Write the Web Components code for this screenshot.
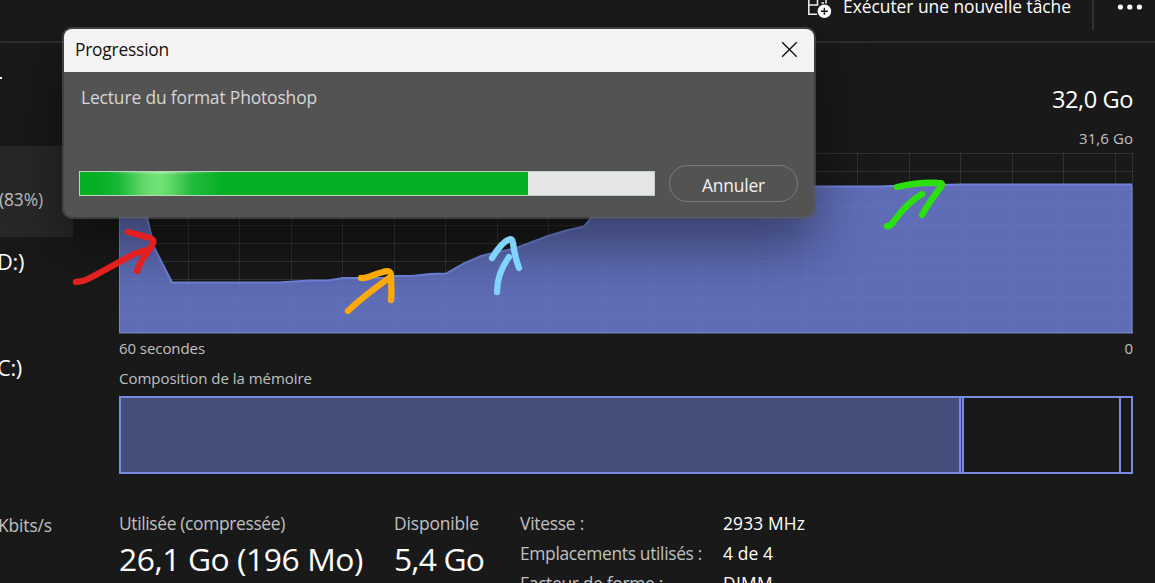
<!DOCTYPE html>
<html lang="fr">
<head>
<meta charset="utf-8">
<title>Gestionnaire des tâches</title>
<style>
  body {
    margin: 0;
    width: 1155px;
    height: 583px;
    overflow: hidden;
    background: #191919;
    color: #fff;
    font-family: "Open Sans", "Noto Sans", sans-serif;
  }
</style>
</head>
<body>
<task-manager></task-manager>

<script>
// Line of text; "w" is the width its letters are spread over
class UiText extends HTMLElement {
  connectedCallback() {
    const size = this.getAttribute('size') || 17.4;
    const line = this.getAttribute('line') || 24;
    const root = this.attachShadow({ mode: 'open' });
    root.innerHTML = `
    <style>
      :host {
        display: block;
        flex: none;
        width: max-content;
        height: ${line}px;
        white-space: nowrap;
        font-size: ${size}px;
        line-height: ${line}px;
      }
      :host([dim]) { color: #c0c0c0; }
      span { display: block; width: max-content; }
    </style>
    <span><slot></slot></span>
    `;
    const w = Number(this.getAttribute('w'));
    if (w) {
      const span = root.querySelector('span');
      const length = Number(this.getAttribute('chars')) || this.textContent.length;
      const extra = (w - span.getBoundingClientRect().width) / length;
      span.style.letterSpacing = extra.toFixed(3) + 'px';
    }
  }
}

class CommandBar extends HTMLElement {
  constructor() {
    super();
    this.attachShadow({ mode: 'open' }).innerHTML = `
    <style>
      :host {
        display: flex;
        justify-content: flex-end;
        align-items: flex-start;
        height: 41px;
        border-bottom: 2px solid #2d2d2d;
      }
      .run { margin: -6px 0 0 11px; }
      .sep { width: 2px; height: 30px; margin-left: 21px; background: #313131; }
      .more { margin-left: 23px; }
      svg { display: block; }
    </style>
    <svg width="24" height="20" viewBox="0 0 24 20" fill="none" stroke="#f2f2f2" stroke-width="1.5">
      <path d="M.8 -4V14.2H9M.8 5H9.5V-4M13.5 3H16M18 3.5V-4"/>
      <circle cx="16.4" cy="11.3" r="6.8" fill="#fff" stroke="none"/>
      <path d="M16.4 7.8v7M12.9 11.3h7" stroke="#191919" stroke-width="1.5"/>
    </svg>
    <ui-text class="run" w="228">Exécuter une nouvelle tâche</ui-text>
    <div class="sep"></div>
    <svg class="more" width="38" height="14" viewBox="0 0 38 14" fill="#fff">
      <circle cx="3.4" cy="7" r="2.6"/><circle cx="12.8" cy="7" r="2.6"/><circle cx="22.4" cy="7" r="2.6"/>
    </svg>
    `;
  }
}

class SideBar extends HTMLElement {
  constructor() {
    super();
    this.attachShadow({ mode: 'open' }).innerHTML = `
    <style>
      :host { display: block; width: 73px; height: 540px; overflow: hidden; }
      :host::before { content: ""; display: block; height: 34px; }
      .cut { width: 2px; height: 2px; background: #ffffe8; }
      .selected { height: 91px; margin-top: 67px; padding-top: 41px; box-sizing: border-box; background: #282828; }
      .selected ui-text { margin-left: -1px; }
      .d { margin: 11px 0 0 -3px; }
      .c { margin: 78px 0 0 -3px; }
      .net { margin: 131px 0 0 -2px; }
    </style>
    <div class="cut"></div>
    <div class="selected"><ui-text dim w="44">(83%)</ui-text></div>
    <ui-text class="d" size="21.8" line="28" w="27">D:)</ui-text>
    <ui-text class="c" size="21.8" line="28" w="25">C:)</ui-text>
    <ui-text class="net" dim w="54">Kbits/s</ui-text>
    `;
  }
}

class MemoryChart extends HTMLElement {
  constructor() {
    super();
    let grid = '';
    for (let i = 0; i < 20; i++) {
      grid += `M${Math.floor(17.9 + i * 51.5)}.5 0V181`;
    }
    for (let y = 0; y < 180; y += 18) {
      grid += `M0 ${y}.5H1014`;
    }
    const line = '0,32 20,33 28,64 35,94 53,129.5 159,129.5 191,127.5 209,127.5 224,125 273,125 276,123 ' +
      '293,123 311,121 327,120.5 344,111 362,103 378,99 396,95.5 413,89 429,83 447,77.5 465,73.5 ' +
      '473,64 500,33.5 761,33.5 793,32.3 811,32.3 841,31.4 1013,31.4';
    this.attachShadow({ mode: 'open' }).innerHTML = `
    <style>
      :host { display: block; height: 181px; }
      svg { display: block; }
    </style>
    <svg width="1014" height="181" viewBox="0 0 1014 181" fill="none">
      <path d="${grid}M1013.5 0V181" stroke="#fff" stroke-opacity=".1"/>
      <polygon points="${line} 1013,180 0,180" fill="#7082df" fill-opacity=".8"/>
      <path d="M.5 32V180M1013 32V180" stroke="#7787d8"/>
      <path d="M0 179.8H1014" stroke="#7380bf" stroke-width="1.4"/>
      <polyline points="${line}" stroke="#7184dc" stroke-width="2"/>
    </svg>
    `;
  }
}

class MemoryComposition extends HTMLElement {
  constructor() {
    super();
    this.attachShadow({ mode: 'open' }).innerHTML = `
    <style>
      :host {
        display: flex;
        box-sizing: border-box;
        height: 78px;
        border: 2px solid #788ce2;
      }
      div { border-right: 2px solid #788ce2; }
      .used { width: 838px; background: #454f7c; }
      .modified { width: 1px; background: #343d6c; }
      .standby { width: 155px; }
    </style>
    <div class="used"></div>
    <div class="modified"></div>
    <div class="standby"></div>
    `;
  }
}

class MemoryStats extends HTMLElement {
  constructor() {
    super();
    this.attachShadow({ mode: 'open' }).innerHTML = `
    <style>
      :host {
        display: grid;
        grid-template-columns: 275px 126px 203px 1fr;
      }
      .col { display: grid; gap: 6px; align-content: start; }
      .big { gap: 2px; }
    </style>
    <div class="col big">
      <ui-text dim w="166">Utilisée (compressée)</ui-text>
      <ui-text size="31.8" line="44" w="244">26,1 Go (196 Mo)</ui-text>
    </div>
    <div class="col big">
      <ui-text dim w="85">Disponible</ui-text>
      <ui-text size="31.8" line="44" w="90">5,4 Go</ui-text>
    </div>
    <div class="col">
      <ui-text dim w="64">Vitesse :</ui-text>
      <ui-text dim w="182">Emplacements utilisés :</ui-text>
      <ui-text dim w="143">Facteur de forme :</ui-text>
    </div>
    <div class="col">
      <ui-text w="82">2933 MHz</ui-text>
      <ui-text w="50">4 de 4</ui-text>
      <ui-text w="50">DIMM</ui-text>
    </div>
    `;
  }
}

class ProgressDialog extends HTMLElement {
  constructor() {
    super();
    this.attachShadow({ mode: 'open' }).innerHTML = `
    <style>
      :host {
        display: block;
        position: absolute;
        left: 62px; top: 27px;
        width: 750px;
        height: 188px;
        border: 2px solid rgba(85,85,85,0.65);
        border-radius: 10px;
        background: #535353;
        background-clip: padding-box;
        box-shadow: 0 28px 56px rgba(0,0,0,0.42);
        overflow: hidden;
      }
      header {
        display: flex;
        justify-content: space-between;
        align-items: center;
        height: 43px;
        padding: 0 17px 0 11px;
        box-sizing: border-box;
        background: #f6f3f5;
        color: #111;
      }
      header ui-text { margin-top: -3px; }
      header svg { margin-top: -2px; }
      .message { margin: 13px 0 0 17px; color: #d6d6d6; }
      .row { display: flex; align-items: center; gap: 14px; margin: 56px 0 0 15px; }
      .track {
        width: 576px;
        height: 25px;
        box-sizing: border-box;
        border: 1px solid #bcd4bd;
        background: #e6e6e6;
      }
      .bar {
        width: 448px;
        height: 23px;
        background:
          radial-gradient(closest-side, rgba(255,255,255,.3), transparent) 22px -2px / 120px 5px no-repeat,
          linear-gradient(90deg, #06b025 18px, #18b634 38px, #62d868 64px, #74e27a 78px, #62d96a 90px, #22bb3c 112px, #06b025 142px);
      }
      button {
        width: 129px;
        height: 37px;
        padding: 3px 0 0;
        display: flex;
        justify-content: center;
        align-items: center;
        border: 1px solid #7c7c7c;
        border-radius: 19px;
        background: none;
        color: #f2f2f2;
        font-family: inherit;
      }
    </style>
    <header>
      <ui-text w="94">Progression</ui-text>
      <svg width="16" height="16" viewBox="0 0 16 16" stroke="#111" stroke-width="1.4">
        <path d="M1.2 .2L15.8 14.8M15.8 .2L1.2 14.8"/>
      </svg>
    </header>
    <ui-text class="message" w="236" chars="27"><slot></slot></ui-text>
    <div class="row">
      <div class="track"><div class="bar"></div></div>
      <button><ui-text w="63">Annuler</ui-text></button>
    </div>
    `;
  }
}

// Hand-drawn arrows over the chart
class MarkerArrows extends HTMLElement {
  constructor() {
    super();
    this.attachShadow({ mode: 'open' }).innerHTML = `
    <style>
      :host { display: block; position: absolute; left: 0; top: 0; pointer-events: none; }
      svg { display: block; }
    </style>
    <svg width="1155" height="583" viewBox="0 0 1155 583" fill="none" stroke-width="6.3" stroke-linecap="round" stroke-linejoin="round">
      <path stroke="#e32020" d="M76 282C80 282 84 281 88 279C105 270 121 261 132 255C138 252 143 251 147 250M128 232C136 234 145 237 150 238C153 239 154 241 153 243C151 249 145 255 142 260C139 265 138 268 137 271"/>
      <path stroke="#ffa90a" d="M348 311C359 300 371 291 389 278M361 278C367 279 374 274 383 272C388 270 391 271 391 276C391 284 392 292 391 300"/>
      <path stroke="#80d4ff" d="M497 292C497 280 501 268 509 257M492 258C497 250 503 242 508 240C511 238 513 240 513 243C514 251 516 260 519 268"/>
      <path stroke="#2be00c" d="M887 226C889 227 892 224 894 221C902 210 910 201 922 194M897 187C910 184 925 182 939 183C942 183 943 184 941 187C933 197 928 204 922 215"/>
    </svg>
    `;
  }
}

class TaskManager extends HTMLElement {
  constructor() {
    super();
    this.attachShadow({ mode: 'open' }).innerHTML = `
    <style>
      :host { display: block; position: relative; height: 583px; overflow: hidden; }
      .content { display: flex; gap: 46px; }
      main { width: 1014px; padding-top: 40px; }
      .right { margin-left: auto; }
      .scale { margin-top: 13px; margin-bottom: 5px; }
      .axis { display: flex; justify-content: space-between; margin: 4px 0 10px; }
      memory-composition { margin: 8px 0 37px; }
    </style>
    <command-bar></command-bar>
    <div class="content">
      <side-bar></side-bar>
      <main>
        <ui-text class="right" size="23.6" line="32" w="81">32,0 Go</ui-text>
        <ui-text class="right scale" dim size="15" line="20" w="54">31,6 Go</ui-text>
        <memory-chart></memory-chart>
        <div class="axis">
          <ui-text dim size="15" line="20" w="86">60 secondes</ui-text>
          <ui-text dim size="15" line="20">0</ui-text>
        </div>
        <ui-text dim size="15" line="20" w="193">Composition de la mémoire</ui-text>
        <memory-composition></memory-composition>
        <memory-stats></memory-stats>
      </main>
    </div>
    <progress-dialog>Lecture du format Photoshop</progress-dialog>
    <marker-arrows></marker-arrows>
    `;
  }
}

customElements.define('ui-text', UiText);
customElements.define('command-bar', CommandBar);
customElements.define('side-bar', SideBar);
customElements.define('memory-chart', MemoryChart);
customElements.define('memory-composition', MemoryComposition);
customElements.define('memory-stats', MemoryStats);
customElements.define('progress-dialog', ProgressDialog);
customElements.define('marker-arrows', MarkerArrows);
customElements.define('task-manager', TaskManager);
</script>
</body>
</html>
